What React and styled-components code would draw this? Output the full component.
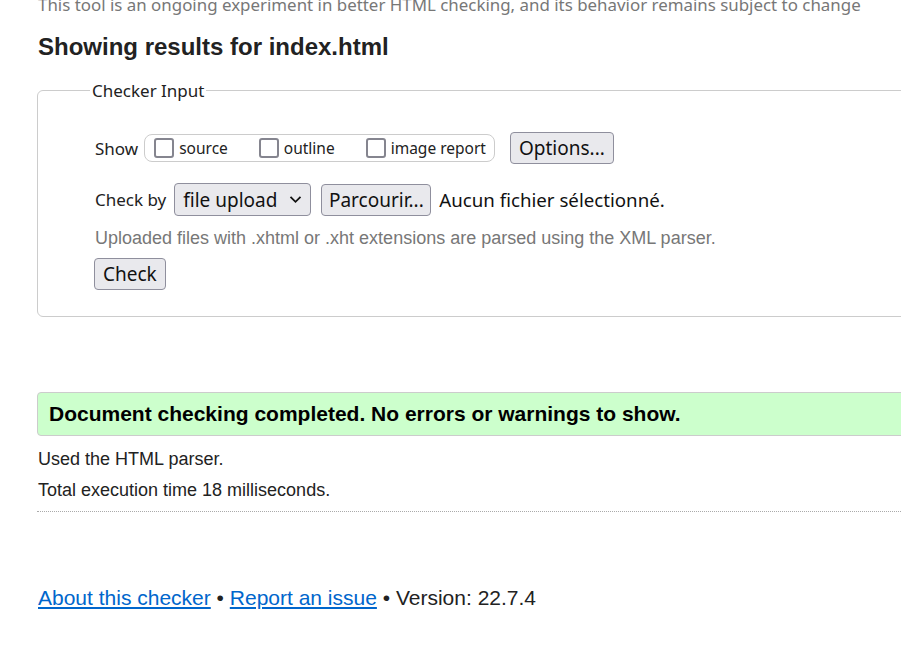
import React from "react";
import styled, { createGlobalStyle } from "styled-components";

const GlobalStyle = createGlobalStyle`
  html, body {
    margin: 0;
    padding: 0;
    background: #fff;
    overflow: hidden;
  }
  body {
    font-family: "Liberation Sans", Arial, sans-serif;
    color: #222;
  }
`;

const Page = styled.div`
  width: 1100px;
  padding: 0 0 0 37px;
  margin-top: -7px;
`;

const Intro = styled.p`
  margin: 0 0 0 1px;
  font-family: "Noto Sans", sans-serif;
  font-size: 16.9px;
  line-height: 24px;
  color: #777;
`;

const Heading = styled.h2`
  margin: 15px 0 0 1px;
  font-size: 24px;
  line-height: 30px;
  font-weight: 700;
  color: #222;
`;

const Fieldset = styled.fieldset`
  margin: 17px 0 0 0;
  padding: 14px 0 26px 57px;
  border: 1px solid #ccc;
  border-radius: 6px;
  font-family: "Noto Sans", sans-serif;
`;

const Legend = styled.legend`
  margin-left: -5px;
  padding: 0 2px;
  font-size: 17px;
  color: #222;
`;

const Row = styled.div`
  display: flex;
  align-items: center;
  gap: 8px;
  margin-top: ${p => p.$top || 0}px;
  font-size: 17px;
  color: #222;
`;

const Label = styled.span`
  font-family: "Noto Sans", sans-serif;
  font-size: 17px;
`;

const Group = styled.div`
  display: flex;
  align-items: center;
  gap: 31px;
  height: 26px;
  padding: 0 8px 0 9px;
  border: 1px solid #ccc;
  border-radius: 8px;
  margin-left: -2px;
`;

const CheckLabel = styled.label`
  display: flex;
  align-items: center;
  gap: 5px;
  font-size: 15.5px;
  color: #222;
`;

const Box = styled.span`
  display: inline-block;
  width: 16px;
  height: 16px;
  border: 2px solid #85858f;
  border-radius: 3px;
  background: #fff;
`;

const Button = styled.button`
  font-family: "Noto Sans", sans-serif;
  font-size: 19px;
  line-height: 24px;
  height: 32px;
  padding: 0 ${p => p.$pad || 8}px;
  margin-left: ${p => p.$left || 0}px;
  color: #111;
  background: #e9e9ed;
  border: 1px solid #8f8f9d;
  border-radius: 4px;
`;

const Select = styled.div`
  display: flex;
  align-items: center;
  gap: 12px;
  height: 31px;
  padding: 0 8px;
  font-size: 19px;
  color: #111;
  background: #e9e9ed;
  border: 1px solid #8f8f9d;
  border-radius: 4px;
`;

const FileName = styled.span`
  font-size: 18.7px;
  color: #111;
`;

const Hint = styled.p`
  margin: 11px 0 0 0;
  font-family: "Liberation Sans", Arial, sans-serif;
  font-size: 18px;
  line-height: 22px;
  color: #777;
`;

const Result = styled.div`
  margin-top: 75px;
  padding: 0 11px;
  height: 42px;
  display: flex;
  align-items: center;
  background: #ccffcc;
  border: 1px solid #ccc;
  border-radius: 4px 0 0 4px;
  font-size: 21px;
  font-weight: 700;
  color: #000;
`;

const Detail = styled.p`
  margin: ${p => p.$top || 0}px 0 0 1px;
  font-size: 18px;
  line-height: 22px;
  color: #222;
`;

const Divider = styled.hr`
  margin: 10px 0 0 0;
  border: none;
  border-top: 1px dotted #aaa;
`;

const Footer = styled.p`
  margin: 74px 0 0 1px;
  font-size: 21px;
  line-height: 24px;
  color: #222;
`;

const Link = styled.a`
  color: #0066cc;
  text-decoration: underline;
`;

const Chevron = () => (
  <svg width="13" height="9" viewBox="0 0 13 9">
    <path d="M1.5 1.8 L6.5 6.8 L11.5 1.8" fill="none" stroke="#111" strokeWidth="1.8" />
  </svg>
);

export default function App() {
  return (
    <>
      <GlobalStyle />
      <Page>
        <Intro>
          This tool is an ongoing experiment in better HTML checking, and its behavior remains subject to change
        </Intro>
        <Heading>Showing results for index.html</Heading>

        <Fieldset>
          <Legend>Checker Input</Legend>
          <Row $top={16}>
            <Label>Show</Label>
            <Group>
              <CheckLabel><Box />source</CheckLabel>
              <CheckLabel><Box />outline</CheckLabel>
              <CheckLabel><Box />image report</CheckLabel>
            </Group>
            <Button $left={7}>Options...</Button>
          </Row>
          <Row $top={19}>
            <Label>Check by</Label>
            <Select>file upload <Chevron /></Select>
            <Button $left={2} $pad={6.5}>Parcourir...</Button>
            <FileName>Aucun fichier sélectionné.</FileName>
          </Row>
          <Hint>Uploaded files with .xhtml or .xht extensions are parsed using the XML parser.</Hint>
          <Row $top={9}>
            <Button $left={-1}>Check</Button>
          </Row>
        </Fieldset>

        <Result>Document checking completed. No errors or warnings to show.</Result>
        <Detail $top={12}>Used the HTML parser.</Detail>
        <Detail $top={9}>Total execution time 18 milliseconds.</Detail>
        <Divider />

        <Footer>
          <Link href="#">About this checker</Link> • <Link href="#">Report an issue</Link> • Version: 22.7.4
        </Footer>
      </Page>
    </>
  );
}
